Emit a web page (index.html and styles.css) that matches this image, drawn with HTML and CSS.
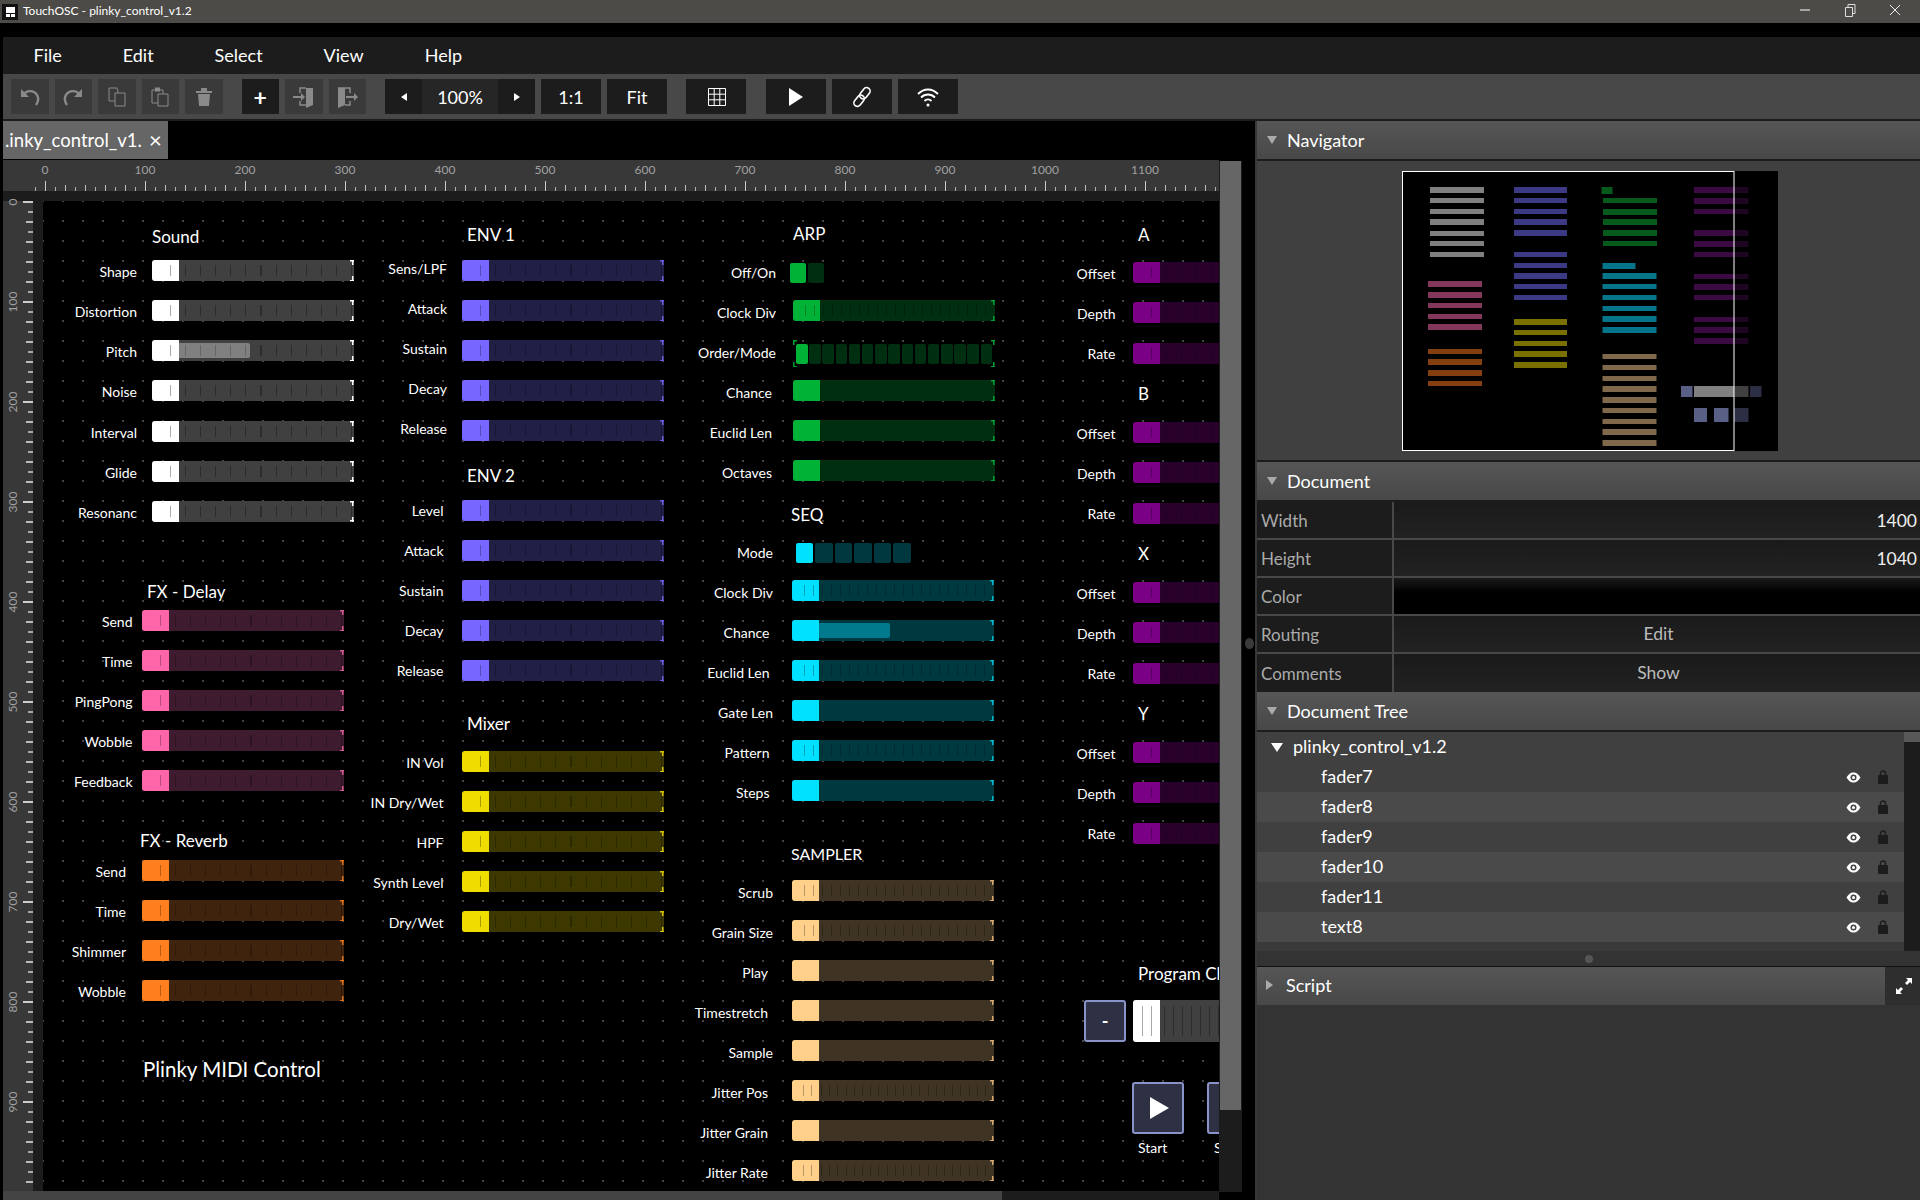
FILE: index.html
```html
<!DOCTYPE html>
<html lang="en">
<head>
<meta charset="utf-8">
<title>TouchOSC - plinky_control_v1.2</title>
<link rel="stylesheet" href="styles.css">
</head>
<body>
<svg class="sprite" width="0" height="0">
  <symbol id="eye" viewBox="0 0 15 11"><path d="M.5 5.500C3 1.500 5 .5 7.500.5s4.500 1 7 5c-2.500 4-4.500 5-7 5s-4.500-1-7-5z" fill="#fff"/><circle cx="7.500" cy="5.500" r="3" fill="#444"/><circle cx="7.500" cy="5.500" r="1.500" fill="#fff"/></symbol>
  <symbol id="lock" viewBox="0 0 10 14"><path d="M2.500 6V3.500a2.500 2.500 0 0 1 5 0V6" fill="none" stroke="#1c1c1c" stroke-width="1.500"/><rect y="5" width="10" height="9" rx="1" fill="#1c1c1c"/></symbol>
</svg>
<div class="app">
  <header class="titlebar">
    <svg class="appicon" width="16" height="16" viewBox="0 0 16 16"><rect width="16" height="16" fill="#111"/><rect x="4" y="3" width="9" height="6" fill="#fff"/><rect x="4" y="10" width="4" height="3" fill="#fff"/><rect x="9" y="10" width="4" height="3" fill="#fff"/></svg>
    <span class="wintitle">TouchOSC - plinky_control_v1.2</span>
    <div class="winbtns">
      <svg width="12" height="12" viewBox="0 0 12 12"><path d="M1 6h10" stroke="#fff" stroke-width="1"/></svg>
      <svg width="12" height="14" viewBox="0 0 12 14"><path d="M1.500 4.500h7v9h-7zM4 4.500V1.500h7v9H8.500" fill="none" stroke="#ddd"/></svg>
      <svg width="12" height="12" viewBox="0 0 12 12"><path d="M1 1l10 10M11 1L1 11" stroke="#eee" stroke-width="1"/></svg>
    </div>
  </header>
  <nav class="menubar"><span>File</span><span>Edit</span><span>Select</span><span>View</span><span>Help</span></nav>
  <div class="toolbar">
    <button class="tb off"><svg width="22" height="22" viewBox="0 0 22 22"><path d="M2 3v8h8z" fill="#8a8a8a"/><path d="M5 8c3-4 10-4 13 1 2 3 1 7-1 10" fill="none" stroke="#8a8a8a" stroke-width="2.400"/></svg></button>
    <button class="tb off"><svg width="22" height="22" viewBox="0 0 22 22"><path d="M20 3v8h-8z" fill="#8a8a8a"/><path d="M17 8c-3-4-10-4-13 1-2 3-1 7 1 10" fill="none" stroke="#8a8a8a" stroke-width="2.400"/></svg></button>
    <button class="tb off"><svg width="20" height="22" viewBox="0 0 20 22"><path d="M2 2h8l1 4v9H2z" fill="none" stroke="#8a8a8a"/><path d="M8 7h10v13H8z" fill="#3a3a3a" stroke="#8a8a8a"/></svg></button>
    <button class="tb off"><svg width="20" height="22" viewBox="0 0 20 22"><path d="M2 4h11v13H2z" fill="none" stroke="#8a8a8a"/><rect x="5" y="1.500" width="5" height="4" fill="#8a8a8a"/><path d="M8 8h10v12H8z" fill="#3a3a3a" stroke="#8a8a8a"/></svg></button>
    <button class="tb off"><svg width="18" height="22" viewBox="0 0 18 22"><path d="M1 5h16v2H1zM6 5V2h6v3M3 8h12l-1 12H4z" fill="#8a8a8a"/></svg></button>
    <button class="tb on sep plus">+</button>
    <button class="tb off"><svg width="24" height="24" viewBox="0 0 24 24"><path d="M14 3h7v17l-7 3z" fill="#8a8a8a"/><path d="M14 3H8v5M8 16v4h6" fill="none" stroke="#8a8a8a" stroke-width="1.500"/><path d="M1 11h8V8l4 4-4 4v-3H1z" fill="#8a8a8a"/></svg></button>
    <button class="tb off"><svg width="24" height="24" viewBox="0 0 24 24"><path d="M3 3h7v17l-7 3z" fill="#8a8a8a"/><path d="M3 3h12v5M15 16v4H10" fill="none" stroke="#8a8a8a" stroke-width="1.500"/><path d="M11 11h8V8l4 4-4 4v-3h-8z" fill="#8a8a8a"/></svg></button>
    <div class="zoomgroup">
      <button class="za"><span class="tri-l"></span></button>
      <span class="zv">100%</span>
      <button class="za"><span class="tri-r"></span></button>
    </div>
    <button class="tb on wide txt">1:1</button>
    <button class="tb on wide txt">Fit</button>
    <button class="tb on wide sep2"><svg width="18" height="18" viewBox="0 0 18 18"><path d="M.5.500h17v17H.500zM.5 6.200h17M.5 11.800h17M6.200.5v17M11.800.5v17" fill="none" stroke="#fff"/></svg></button>
    <button class="tb on wide sep3"><svg width="16" height="20" viewBox="0 0 16 20"><path d="M1 1l14 9-14 9z" fill="#fff"/></svg></button>
    <button class="tb on wide"><svg width="20" height="22" viewBox="0 0 20 22"><g fill="none" stroke="#fff" stroke-width="1.600" transform="rotate(-52 10 11)"><rect x="-1" y="7.500" width="12.500" height="7" rx="3.500"/><rect x="8.500" y="7.500" width="12.500" height="7" rx="3.500"/></g></svg></button>
    <button class="tb on wide"><svg width="24" height="20" viewBox="0 0 24 20"><path d="M2 7c6-6 14-6 20 0M5 10.500c4-4 10-4 14 0M8.500 14c2-2 5-2 7 0" fill="none" stroke="#fff" stroke-width="1.800"/><circle cx="12" cy="18" r="1.500" fill="#fff"/></svg></button>
  </div>

  <div class="main">
    <section class="editor">
      <div class="tabs"><div class="tab"><span class="tabname">.inky_control_v1.</span><span class="tabx">×</span></div></div>
      <div class="workspace">
        <div class="ruler-h">
          <span class="rn rn0">0</span><span class="rn rn1">100</span><span class="rn rn2">200</span><span class="rn rn3">300</span><span class="rn rn4">400</span><span class="rn rn5">500</span><span class="rn rn6">600</span><span class="rn rn7">700</span><span class="rn rn8">800</span><span class="rn rn9">900</span><span class="rn rn10">1000</span><span class="rn rn11">1100</span>
        </div>
        <div class="vscroll"><div class="vthumb"></div></div>
        <div class="ruler-v">
          <span class="rv rv0">0</span><span class="rv rv1">100</span><span class="rv rv2">200</span><span class="rv rv3">300</span><span class="rv rv4">400</span><span class="rv rv5">500</span><span class="rv rv6">600</span><span class="rv rv7">700</span><span class="rv rv8">800</span><span class="rv rv9">900</span>
        </div>
        <div class="canvas">

          <div class="group g-sound white">
            <h3 class="gt">Sound</h3>
            <div class="row"><label>Shape</label><div class="fader t"><i></i></div></div>
            <div class="row"><label>Distortion</label><div class="fader t"><i></i></div></div>
            <div class="row"><label>Pitch</label><div class="fader t"><i></i><b class="fill f72 tt"></b></div></div>
            <div class="row"><label>Noise</label><div class="fader t"><i></i></div></div>
            <div class="row"><label>Interval</label><div class="fader t"><i></i></div></div>
            <div class="row"><label>Glide</label><div class="fader t"><i></i></div></div>
            <div class="row"><label>Resonanc</label><div class="fader t"><i></i></div></div>
          </div>

          <div class="group g-delay pink">
            <h3 class="gt">FX - Delay</h3>
            <div class="row"><label>Send</label><div class="fader t"><i></i></div></div>
            <div class="row"><label>Time</label><div class="fader t"><i></i></div></div>
            <div class="row"><label>PingPong</label><div class="fader t"><i></i></div></div>
            <div class="row"><label>Wobble</label><div class="fader t"><i></i></div></div>
            <div class="row"><label>Feedback</label><div class="fader t"><i></i></div></div>
          </div>

          <div class="group g-reverb orange">
            <h3 class="gt">FX - Reverb</h3>
            <div class="row"><label>Send</label><div class="fader t"><i></i></div></div>
            <div class="row"><label>Time</label><div class="fader t"><i></i></div></div>
            <div class="row"><label>Shimmer</label><div class="fader t"><i></i></div></div>
            <div class="row"><label>Wobble</label><div class="fader t"><i></i></div></div>
          </div>

          <div class="plinky">Plinky MIDI Control</div>

          <div class="group g-env1 violet">
            <h3 class="gt">ENV 1</h3>
            <div class="row"><label>Sens/LPF</label><div class="fader t"><i></i></div></div>
            <div class="row"><label>Attack</label><div class="fader t"><i></i></div></div>
            <div class="row"><label>Sustain</label><div class="fader t"><i></i></div></div>
            <div class="row"><label>Decay</label><div class="fader t"><i></i></div></div>
            <div class="row"><label>Release</label><div class="fader t"><i></i></div></div>
          </div>

          <div class="group g-env2 violet">
            <h3 class="gt">ENV 2</h3>
            <div class="row"><label>Level</label><div class="fader t"><i></i></div></div>
            <div class="row"><label>Attack</label><div class="fader t"><i></i></div></div>
            <div class="row"><label>Sustain</label><div class="fader t"><i></i></div></div>
            <div class="row"><label>Decay</label><div class="fader t"><i></i></div></div>
            <div class="row"><label>Release</label><div class="fader t"><i></i></div></div>
          </div>

          <div class="group g-mixer yellow">
            <h3 class="gt">Mixer</h3>
            <div class="row"><label>IN Vol</label><div class="fader t"><i></i></div></div>
            <div class="row"><label>IN Dry/Wet</label><div class="fader t"><i></i></div></div>
            <div class="row"><label>HPF</label><div class="fader t"><i></i></div></div>
            <div class="row"><label>Synth Level</label><div class="fader t"><i></i></div></div>
            <div class="row"><label>Dry/Wet</label><div class="fader t"><i></i></div></div>
          </div>

          <div class="group g-arp green">
            <h3 class="gt">ARP</h3>
            <div class="row"><label>Off/On</label><div class="segs two"><u class="sel"></u><u></u></div></div>
            <div class="row"><label>Clock Div</label><div class="fader d"><i></i></div></div>
            <div class="row"><label>Order/Mode</label><div class="fader outline"><div class="segs fifteen"><u class="sel"></u><u></u><u></u><u></u><u></u><u></u><u></u><u></u><u></u><u></u><u></u><u></u><u></u><u></u><u></u></div></div></div>
            <div class="row"><label class="nudge">Chance</label><div class="fader"><i></i></div></div>
            <div class="row"><label class="nudge">Euclid Len</label><div class="fader"><i></i></div></div>
            <div class="row"><label class="nudge">Octaves</label><div class="fader"><i></i></div></div>
          </div>

          <div class="group g-seq cyan">
            <h3 class="gt">SEQ</h3>
            <div class="row"><label>Mode</label><div class="segs six"><u class="sel"></u><u></u><u></u><u></u><u></u><u></u></div></div>
            <div class="row"><label>Clock Div</label><div class="fader d"><i></i></div></div>
            <div class="row"><label class="nudge">Chance</label><div class="fader"><i></i><b class="fill f72"></b></div></div>
            <div class="row"><label class="nudge">Euclid Len</label><div class="fader d"><i></i></div></div>
            <div class="row"><label>Gate Len</label><div class="fader"><i></i></div></div>
            <div class="row"><label class="nudge">Pattern</label><div class="fader d"><i></i></div></div>
            <div class="row"><label class="nudge">Steps</label><div class="fader"><i></i></div></div>
          </div>

          <div class="group g-sampler sand">
            <h3 class="gt">SAMPLER</h3>
            <div class="row"><label>Scrub</label><div class="fader d"><i></i></div></div>
            <div class="row"><label>Grain Size</label><div class="fader d"><i></i></div></div>
            <div class="row"><label class="nudge">Play</label><div class="fader"><i></i></div></div>
            <div class="row"><label class="nudge">Timestretch</label><div class="fader"><i></i></div></div>
            <div class="row"><label>Sample</label><div class="fader"><i></i></div></div>
            <div class="row"><label class="nudge">Jitter Pos</label><div class="fader d2"><i></i></div></div>
            <div class="row"><label class="nudge">Jitter Grain</label><div class="fader"><i></i></div></div>
            <div class="row"><label class="nudge">Jitter Rate</label><div class="fader d2"><i></i></div></div>
          </div>

          <div class="group g-a magenta">
            <h3 class="gt">A</h3>
            <div class="row"><label>Offset</label><div class="fader t"><i></i></div></div>
            <div class="row"><label>Depth</label><div class="fader t"><i></i></div></div>
            <div class="row"><label>Rate</label><div class="fader t"><i></i></div></div>
          </div>
          <div class="group g-b magenta">
            <h3 class="gt">B</h3>
            <div class="row"><label>Offset</label><div class="fader t"><i></i></div></div>
            <div class="row"><label>Depth</label><div class="fader t"><i></i></div></div>
            <div class="row"><label>Rate</label><div class="fader t"><i></i></div></div>
          </div>
          <div class="group g-x magenta">
            <h3 class="gt">X</h3>
            <div class="row"><label>Offset</label><div class="fader t"><i></i></div></div>
            <div class="row"><label>Depth</label><div class="fader t"><i></i></div></div>
            <div class="row"><label>Rate</label><div class="fader t"><i></i></div></div>
          </div>
          <div class="group g-y magenta">
            <h3 class="gt">Y</h3>
            <div class="row"><label>Offset</label><div class="fader t"><i></i></div></div>
            <div class="row"><label>Depth</label><div class="fader t"><i></i></div></div>
            <div class="row"><label>Rate</label><div class="fader t"><i></i></div></div>
          </div>

          <div class="pc-title">Program Change</div>
          <div class="pc-minus">-</div>
          <div class="pc-fader"><i></i></div>
          <div class="transport tr-start"><svg width="20" height="22" viewBox="0 0 20 22"><path d="M0 0l19 11L0 22z" fill="#fff"/></svg></div>
          <div class="tr-label tl-start">Start</div>
          <div class="transport tr-stop"></div>
          <div class="tr-label tl-stop">Stop</div>
        </div>
        <div class="hscroll"><div class="hthumb"></div></div>
      </div>
    </section>

    <aside class="side">
      <div class="sash"></div>
      <div class="phead"><span class="arrow-d"></span>Navigator</div>
      <div class="navbody">
        <svg class="mini" width="376" height="280" viewBox="0 0 376 280">
          <rect width="376" height="280" fill="#000"/>
          <g fill="#808080"><rect x="28" y="16" width="54" height="6"/><rect x="28" y="27" width="54" height="5"/><rect x="28" y="38" width="54" height="5"/><rect x="28" y="48" width="54" height="6"/><rect x="28" y="60" width="54" height="5"/><rect x="28" y="70" width="54" height="5"/><rect x="28" y="81" width="54" height="5"/></g>
          <g fill="#3d3a85"><rect x="112" y="16" width="53" height="6"/><rect x="112" y="27" width="53" height="5"/><rect x="112" y="38" width="53" height="5"/><rect x="112" y="48" width="53" height="6"/><rect x="112" y="59" width="53" height="6"/><rect x="112" y="81" width="53" height="5"/><rect x="112" y="92" width="53" height="5"/><rect x="112" y="102" width="53" height="6"/><rect x="112" y="113" width="53" height="5"/><rect x="112" y="124" width="53" height="5"/></g>
          <g fill="#83375a"><rect x="26" y="110" width="54" height="6"/><rect x="26" y="121" width="54" height="6"/><rect x="26" y="132" width="54" height="5"/><rect x="26" y="143" width="54" height="5"/><rect x="26" y="153" width="54" height="6"/></g>
          <g fill="#843f10"><rect x="26" y="178" width="54" height="5"/><rect x="26" y="188" width="54" height="6"/><rect x="26" y="199" width="54" height="6"/><rect x="26" y="210" width="54" height="5"/></g>
          <g fill="#7a7000"><rect x="112" y="148" width="53" height="6"/><rect x="112" y="159" width="53" height="5"/><rect x="112" y="170" width="53" height="5"/><rect x="112" y="180" width="53" height="6"/><rect x="112" y="191" width="53" height="6"/></g>
          <g fill="#055a1c"><rect x="199.500" y="16" width="11" height="7"/><rect x="201" y="27" width="54" height="5"/><rect x="201" y="38" width="54" height="6"/><rect x="201" y="48" width="54" height="6"/><rect x="201" y="59" width="54" height="6"/><rect x="201" y="70" width="54" height="5"/></g>
          <g fill="#06758a"><rect x="200.500" y="92" width="33" height="6"/><rect x="200.500" y="102" width="54" height="6"/><rect x="200.500" y="113" width="54" height="5"/><rect x="200.500" y="124" width="54" height="5"/><rect x="200.500" y="135" width="54" height="5"/><rect x="200.500" y="145" width="54" height="6"/><rect x="200.500" y="156" width="54" height="6"/></g>
          <g fill="#80694a"><rect x="200.500" y="183" width="54" height="5"/><rect x="200.500" y="194" width="54" height="5"/><rect x="200.500" y="205" width="54" height="5"/><rect x="200.500" y="215" width="54" height="6"/><rect x="200.500" y="226" width="54" height="6"/><rect x="200.500" y="237" width="54" height="5"/><rect x="200.500" y="248" width="54" height="5"/><rect x="200.500" y="258" width="54" height="6"/><rect x="200.500" y="269" width="54" height="6"/></g>
          <g fill="#3c0a42"><rect x="292" y="16" width="54.500" height="6"/><rect x="292" y="27" width="54.500" height="6"/><rect x="292" y="38" width="54.500" height="5"/><rect x="292" y="59" width="54.500" height="6"/><rect x="292" y="70" width="54.500" height="6"/><rect x="292" y="81" width="54.500" height="5"/><rect x="292" y="103" width="54.500" height="5"/><rect x="292" y="113" width="54.500" height="6"/><rect x="292" y="124" width="54.500" height="5"/><rect x="292" y="146" width="54.500" height="5"/><rect x="292" y="156" width="54.500" height="6"/><rect x="292" y="167" width="54.500" height="6"/></g>
          <rect x="332" y="0" width="44" height="280" fill="#000" opacity=".5"/>
          <rect x="279" y="215" width="11.500" height="11" fill="#5a5f86"/><rect x="292" y="215" width="40" height="11" fill="#808080"/><rect x="332" y="215" width="14.500" height="11" fill="#404040"/><rect x="348" y="215" width="11.500" height="11" fill="#2c2f43"/>
          <rect x="292" y="237" width="13" height="14" fill="#5a5f86"/><rect x="312" y="237" width="14.500" height="14" fill="#5a5f86"/><rect x="332" y="237" width="14.500" height="14" fill="#2c2f43"/>
          <rect x=".5" y=".5" width="331.500" height="279" fill="none" stroke="#fff"/>
        </svg>
      </div>
      <div class="phead"><span class="arrow-d"></span>Document</div>
      <div class="props">
        <div class="prop"><span class="pl">Width</span><span class="pv num">1400</span></div>
        <div class="prop"><span class="pl">Height</span><span class="pv num">1040</span></div>
        <div class="prop"><span class="pl">Color</span><span class="pv color"></span></div>
        <div class="prop"><span class="pl">Routing</span><span class="pv mid">Edit</span></div>
        <div class="prop"><span class="pl">Comments</span><span class="pv mid">Show</span></div>
      </div>
      <div class="phead"><span class="arrow-d"></span>Document Tree</div>
      <div class="tree">
        <div class="tlist">
          <div class="troot"><span class="arrow-w"></span><span class="tname">plinky_control_v1.2</span></div>
          <div class="titem"><span class="tname">fader7</span><svg class="eye"><use href="#eye"/></svg><svg class="lock"><use href="#lock"/></svg></div>
          <div class="titem"><span class="tname">fader8</span><svg class="eye"><use href="#eye"/></svg><svg class="lock"><use href="#lock"/></svg></div>
          <div class="titem"><span class="tname">fader9</span><svg class="eye"><use href="#eye"/></svg><svg class="lock"><use href="#lock"/></svg></div>
          <div class="titem"><span class="tname">fader10</span><svg class="eye"><use href="#eye"/></svg><svg class="lock"><use href="#lock"/></svg></div>
          <div class="titem"><span class="tname">fader11</span><svg class="eye"><use href="#eye"/></svg><svg class="lock"><use href="#lock"/></svg></div>
          <div class="titem"><span class="tname">text8</span><svg class="eye"><use href="#eye"/></svg><svg class="lock"><use href="#lock"/></svg></div>
        </div>
        <div class="tscroll"><div class="tthumb"></div></div>
      </div>
      <div class="resize"><span class="dot"></span></div>
      <div class="scripthead">
        <div class="phead closed"><span class="arrow-r"></span>Script</div>
        <div class="expand"><svg width="18" height="18" viewBox="0 0 18 18"><path d="M11 1h6v6l-2-2-3 3-2-2 3-3zM7 17H1v-6l2 2 3-3 2 2-3 3z" fill="#fff"/></svg></div>
      </div>
      <div class="scriptbody"></div>
    </aside>
  </div>
</div>
</body>
</html>
```

FILE: styles.css
```css
* { box-sizing: border-box; }
html, body { margin: 0; padding: 0; background: #000; }
body { font-family: "Lato", "Noto Sans", sans-serif; color: #fff; }
.sprite { position: absolute; }
.app { width: 1920px; height: 1200px; overflow: hidden; display: flex; flex-direction: column; background: #000; }

.titlebar { height: 23px; background: #4c4b48; display: flex; align-items: center; padding-left: 2px; margin-bottom: 14px; flex: none; }
.appicon { flex: none; }
.wintitle { font-size: 12px; margin-left: 5px; color: #fff; padding-bottom: 2px; }
.winbtns { margin-left: auto; display: flex; align-items: center; gap: 33px; padding: 0 19px 3px 0; }

.menubar { height: 37px; margin-left: 3px; background: #1c1c1c; display: flex; align-items: center; font-size: 18px; flex: none; padding-bottom: 1px; }
.menubar span { padding: 0 30.500px; }

.toolbar { height: 47px; margin-left: 3px; background: #484848; border-bottom: 2px solid #1c1c1c; display: flex; align-items: flex-start; padding: 5px 0 0 8px; gap: 6px; flex: none; }
.tb { width: 37.500px; height: 35px; border: 0; padding: 0; display: flex; align-items: center; justify-content: center; color: #fff; font-family: inherit; }
.tb.off { background: #3a3a3a; }
.tb.on { background: #1c1c1c; }
.tb.wide { width: 60px; }
.tb.txt { font-size: 18px; }
.tb.plus { font-size: 23px; font-weight: 700; }
.sep { margin-left: 13px; }
.sep2 { margin-left: 13px; padding-left: 2px; }
.sep3 { margin-left: 14px; }
.zoomgroup { display: flex; height: 35px; width: 150px; background: #1c1c1c; margin-left: 13px; }
.za { width: 37px; border: 0; background: #1c1c1c; padding: 0; display: flex; align-items: center; justify-content: center; }
.zv { flex: 1; background: #262626; font-size: 18px; display: flex; align-items: center; justify-content: center; }
.tri-l, .tri-r { width: 0; height: 0; border-top: 4px solid transparent; border-bottom: 4px solid transparent; }
.tri-l { border-right: 6px solid #fff; }
.tri-r { border-left: 6px solid #fff; }

.main { flex: 1; display: flex; min-height: 0; }
.editor { width: 1242px; padding-left: 3px; display: flex; flex-direction: column; flex: none; }
.tabs { height: 38px; flex: none; margin-bottom: 1px; }
.tab { width: 165px; height: 38px; background: #666; display: flex; align-items: center; font-size: 18.500px; }
.tabname { white-space: nowrap; padding-left: 2px; }
.tabx { margin-left: 7px; font-size: 22px; line-height: 1; }

.workspace { position: relative; height: 1041px; background: #000; }
.ruler-h { position: absolute; left: 0; top: 0; width: 1216px; height: 41px; background-color: #1c1c1c;
  background-image: linear-gradient(#383838, #383838);
  background-size: 100% 31px; background-repeat: no-repeat; }
.ruler-h::after { content: ""; position: absolute; left: 32px; top: 21px; width: 1184px; height: 10px;
  background-image:
    linear-gradient(90deg, #ccc 1px, transparent 1px),
    linear-gradient(90deg, #c0c0c0 1px, transparent 1px),
    linear-gradient(90deg, #b0b0b0 1px, transparent 1px);
  background-size: 100px 10px, 20px 6px, 10px 4px;
  background-position: 10px bottom, 10px bottom, 0 bottom;
  background-repeat: repeat-x; }
.rn { position: absolute; top: 2px; font-size: 12px; color: #a0a0a0; width: 50px; margin-left: -25px; text-align: center; }
.rn0 { left: 42px; } .rn1 { left: 142px; } .rn2 { left: 242px; } .rn3 { left: 342px; } .rn4 { left: 442px; } .rn5 { left: 542px; } .rn6 { left: 642px; } .rn7 { left: 742px; } .rn8 { left: 842px; } .rn9 { left: 942px; } .rn10 { left: 1042px; } .rn11 { left: 1142px; }
.ruler-v { position: absolute; left: 0; top: 41px; width: 40px; height: 990px; background-color: #1c1c1c;
  background-image: linear-gradient(#383838, #383838); background-size: 30px 100%; background-repeat: no-repeat; }
.ruler-v::after { content: ""; position: absolute; left: 20px; top: 0; width: 10px; height: 990px;
  background-image:
    linear-gradient(#ccc 2px, transparent 2px),
    linear-gradient(#bbb 2px, transparent 2px),
    linear-gradient(#aaa 2px, transparent 2px);
  background-size: 10px 100px, 7px 20px, 5px 10px;
  background-position: right 0, right 0, right 0;
  background-repeat: repeat-y; }
.rv { position: absolute; left: 10px; font-size: 12px; color: #a0a0a0; width: 50px; height: 14px; line-height: 14px; margin: -7px 0 0 -25px; text-align: center; transform: rotate(-90deg); }
.rv0 { top: 1px; } .rv1 { top: 101px; } .rv2 { top: 201px; } .rv3 { top: 301px; } .rv4 { top: 401px; } .rv5 { top: 501px; } .rv6 { top: 601px; } .rv7 { top: 701px; } .rv8 { top: 801px; } .rv9 { top: 901px; }

.canvas { position: absolute; left: 40px; top: 41px; width: 1176px; height: 990px; overflow: hidden; background-color: #000;
  background-image: radial-gradient(circle at 1px 1px, #444 1px, transparent 1.300px);
  background-size: 20px 20px; background-position: -1px -1px; }
.vscroll { position: absolute; left: 1216px; top: 1px; width: 23px; height: 1031px; background: #1c1c1c; }
.vthumb { width: 21px; height: 949px; margin-left: 1px; background: #666; }
.hscroll { position: absolute; left: 0; top: 1031px; width: 1216px; height: 10px; background: #1c1c1c; }
.hthumb { width: 999px; height: 9px; background: #444; }

.group { position: absolute; --row: 40px; --lbl: 15px; --nudge: 4px; }
.gt { margin: 0; font-weight: 400; font-size: 17px; line-height: 20px; position: absolute; white-space: nowrap; }
.row { height: var(--row); display: flex; align-items: flex-start; position: relative; }
.row label { position: absolute; right: 100%; top: var(--lt, 3px); margin-right: var(--lbl); font-size: 14px; line-height: 20px; white-space: nowrap; }
.row label.nudge { margin-right: calc(var(--lbl) + var(--nudge)); }

.fader { position: relative; width: 201.500px; height: 21px; background-color: var(--bg); border-radius: 3px 0 0 3px; flex: none; }
.fader i { position: absolute; left: 0; top: 0; bottom: 0; width: 26.500px; background: var(--h); border-radius: 3px 0 0 3px; z-index: 2; }
.fader::after { content: ""; position: absolute; right: 0; top: 0; bottom: 0; width: 4px; z-index: 3;
  background-image: linear-gradient(var(--c), var(--c)), linear-gradient(var(--c), var(--c)), linear-gradient(var(--c), var(--c)), linear-gradient(var(--c), var(--c));
  background-size: 4px 1.500px, 1.500px 5px, 4px 1.500px, 1.500px 5px;
  background-position: right top, right top, right bottom, right bottom;
  background-repeat: no-repeat; }
.fader.t, .fader.d, .fader.d2 { background-repeat: no-repeat; }
.fader.t { background-image: repeating-linear-gradient(90deg, var(--tk) 0 1px, transparent 1px 15.100px); background-size: calc(100% - 33px) 11px; background-position: 33px 5px; }
.fader.d { background-image: repeating-linear-gradient(90deg, var(--tk) 0 1px, transparent 1px 9px); background-size: calc(100% - 34px) 11px; background-position: 30px 5px; }
.fader.d2 { background-image: repeating-linear-gradient(90deg, var(--tk) 0 1px, transparent 1px 8.200px); background-size: calc(100% - 34px) 11px; background-position: 29px 5px; }
.fader.t i::after, .fader.d i::after, .fader.d2 i::after { content: ""; position: absolute; top: 5px; height: 11px; }
.fader.t i::after { left: 18px; width: 1px; background: var(--htk); }
.fader.d i::after { left: 12px; width: 10px; background: repeating-linear-gradient(90deg, var(--htk) 0 1px, transparent 1px 9px); }
.fader.d2 i::after { left: 11px; width: 9px; background: repeating-linear-gradient(90deg, var(--htk) 0 1px, transparent 1px 8px); }
.fill { position: absolute; left: 26px; top: 3px; bottom: 3px; background-color: var(--v); border-radius: 0 2px 2px 0; z-index: 1; }
.fill.tt { background-image: repeating-linear-gradient(90deg, #666 0 1px, transparent 1px 15.100px); background-size: 100% 11px; background-position: 7px 2px; background-repeat: no-repeat; }
.f72 { width: 72px; }
.fader.outline { background: none; height: 27px; }
.fader.outline::before { content: ""; position: absolute; left: 0; top: 0; bottom: 0; width: 4px;
  background-image: linear-gradient(var(--c), var(--c)), linear-gradient(var(--c), var(--c)), linear-gradient(var(--c), var(--c)), linear-gradient(var(--c), var(--c));
  background-size: 4px 1.500px, 1.500px 5px, 4px 1.500px, 1.500px 5px;
  background-position: left top, left top, left bottom, left bottom;
  background-repeat: no-repeat; }
.fader.outline .segs { position: absolute; left: 3px; top: 3.500px; }
.segs { display: flex; flex: none; }
.segs u { display: block; background: var(--bg); border-radius: 2px; height: 20px; }
.segs u.sel { background: var(--h); }
.segs.two { gap: 2px; margin: 3px 0 0 -3px; }
.segs.two u { width: 16px; }
.segs.six { gap: 2px; margin: 3px 0 0 3.500px; }
.segs.six u { width: 17.600px; }
.segs.fifteen { gap: 1.700px; }
.segs.fifteen u { width: 11.500px; }

.white { --h: #fff; --bg: #404040; --tk: #2c2c2c; --htk: #aaa; --c: #fff; --v: #808080; }
.pink { --h: #ff66aa; --bg: #3e1b2e; --tk: #2d1421; --htk: #b84c7c; --c: #d85a92; --v: #a04570; }
.orange { --h: #ff7f1f; --bg: #3f230d; --tk: #2e190a; --htk: #b85c14; --c: #e07018; --v: #a05010; }
.violet { --h: #7766ff; --bg: #211f45; --tk: #181733; --htk: #5a4cb8; --c: #6a5de0; --v: #4a44a0; }
.yellow { --h: #f0dd00; --bg: #3d3800; --tk: #2c2900; --htk: #a69c00; --c: #d4c400; --v: #908800; }
.green { --h: #00b336; --bg: #002e10; --tk: #00220c; --htk: #008228; --c: #00a030; --v: #006a20; }
.cyan { --h: #00e1ff; --bg: #00383f; --tk: #002a30; --htk: #00a2b8; --c: #00b8d0; --v: #007a8c; }
.sand { --h: #ffd08a; --bg: #3f3324; --tk: #2e2519; --htk: #b89568; --c: #d4aa70; --v: #a08860; }
.magenta { --h: #7a0085; --bg: #280029; --tk: #1e001f; --htk: #580060; --c: #7a0085; --v: #500058; }

.g-sound { left: 109px; top: 59px; --lt: 2px; --row: 40.170px; } .g-sound .gt { left: 0; top: -33px; }
.g-delay { left: 99px; top: 409px; --lt: 2px; --lbl: 9.500px; } .g-delay .gt { left: 5px; top: -28px; }
.g-reverb { left: 99px; top: 659px; --lt: 2px; --lbl: 16px; } .g-reverb .gt { left: -2px; top: -29px; }
.plinky { position: absolute; left: 100px; top: 855px; font-size: 20.500px; line-height: 26px; white-space: nowrap; }
.g-env1 { left: 419px; top: 59px; --lt: -1px; } .g-env1 .gt { left: 5px; top: -35px; }
.g-env2 { left: 419px; top: 299px; --lt: 1px; --lbl: 18.500px; } .g-env2 .gt { left: 5px; top: -34px; }
.g-mixer { left: 419px; top: 550px; --lt: 2px; --lbl: 18.500px; } .g-mixer .gt { left: 5px; top: -37px; }
.g-arp { left: 750px; top: 59px; --lt: 3px; --lbl: 17px; } .g-arp .gt { left: 0; top: -36px; }
.g-seq { left: 749px; top: 339px; --lt: 3px; --lbl: 19px; --nudge: 3.500px; } .g-seq .gt { left: -1px; top: -35px; }
.g-sampler { left: 749px; top: 679px; --lt: 3px; --lbl: 19px; --nudge: 5px; } .g-sampler .gt { left: -1px; top: -36px; font-size: 16px; }
.magenta { --row: 40.330px; --lt: 1.500px; --lbl: 17.500px; }
.g-a { left: 1090px; top: 61px; } .g-a .gt { left: 5px; top: -37px; }
.g-b { left: 1090px; top: 221px; } .g-b .gt { left: 5px; top: -38px; }
.g-x { left: 1090px; top: 381px; } .g-x .gt { left: 5px; top: -38px; }
.g-y { left: 1090px; top: 541px; } .g-y .gt { left: 5px; top: -38px; }

.pc-title { position: absolute; left: 1095px; top: 763px; font-size: 17px; line-height: 20px; white-space: nowrap; }
.pc-minus { position: absolute; left: 1041px; top: 799px; width: 42px; height: 42px; background: #2e3144; border: 2px solid #8a93c8; border-radius: 3px; display: flex; align-items: center; justify-content: center; font-size: 18px; font-weight: 700; }
.pc-fader { position: absolute; left: 1090px; top: 799px; width: 201px; height: 42px; background-color: #404040; --tk: #2c2c2c; border-radius: 3px 0 0 3px;
  background-image: repeating-linear-gradient(90deg, var(--tk) 0 1px, transparent 1px 9px); background-size: 100% 30px; background-position: 31px 6px; background-repeat: no-repeat; }
.pc-fader i { position: absolute; left: 0; top: 0; bottom: 0; width: 27px; background-color: #fff; border-radius: 3px 0 0 3px;
  background-image: repeating-linear-gradient(90deg, #aaa 0 1px, transparent 1px 9px); background-size: 19px 30px; background-position: 9px 6px; background-repeat: no-repeat; }
.transport { position: absolute; width: 52px; height: 52px; background: #2e3144; border: 2px solid #8a93c8; border-radius: 3px; display: flex; align-items: center; justify-content: center; padding-left: 3px; }
.tr-start { left: 1089px; top: 881px; }
.tr-stop { left: 1164px; top: 881px; }
.tr-label { position: absolute; font-size: 14px; line-height: 18px; top: 938px; }
.tl-start { left: 1095px; }
.tl-stop { left: 1171px; }

.side { position: relative; flex: 1; padding-left: 15px; background: #000; display: flex; flex-direction: column; min-width: 0; }
.side::before { content: ""; position: absolute; left: 13px; top: 0; bottom: 0; width: 2px; background: #383838; }
.sash { position: absolute; left: 3px; top: 517px; width: 9px; height: 11px; background: #3a3a3a; border-radius: 50%; }
.phead { height: 40px; flex: none; background: linear-gradient(#565656, #484848); border-bottom: 2px solid #1c1c1c; display: flex; align-items: center; padding-left: 10px; font-size: 18px; color: #fff; }
.arrow-d { width: 0; height: 0; border-left: 5px solid transparent; border-right: 5px solid transparent; border-top: 8px solid #aaa; margin-right: 10px; }
.arrow-r { width: 0; height: 0; border-top: 5px solid transparent; border-bottom: 5px solid transparent; border-left: 7px solid #aaa; margin-right: 13px; }
.arrow-w { width: 0; height: 0; border-left: 6px solid transparent; border-right: 6px solid transparent; border-top: 9px solid #fff; margin: 0 10px 0 14px; }
.navbody { height: 301px; flex: none; background: #404040; border-bottom: 2px solid #1c1c1c; padding: 10px 0 0 145px; }
.mini { display: block; }
.props { flex: none; background: #1c1c1c; }
.prop { height: 38px; display: flex; border-bottom: 2px solid #484848; font-size: 17.500px; }
.prop:last-child { border-bottom: 0; }
.pl { width: 137px; flex: none; padding-left: 4px; color: #aaa; display: flex; align-items: center; border-right: 2px solid #484848; background: #1c1c1c; font-size: 17px; }
.pv { flex: 1; display: flex; align-items: center; color: #ccc; background: linear-gradient(#1a1a1a, #222); padding-right: 3px; }
.pv.num { justify-content: flex-end; color: #eee; }
.pv.mid { justify-content: center; color: #bbb; padding: 0 0 2px 3px; }
.pv.color { background: linear-gradient(#1a1a1a, #000 40%); }
.tree { height: 219px; flex: none; display: flex; background: #3a3a3a; }
.tlist { flex: 1; }
.troot { height: 30px; background: #404040; display: flex; align-items: center; font-size: 18px; }
.titem { height: 30px; display: flex; align-items: center; font-size: 18px; padding: 0 16px 0 64px; background: #404040; }
.titem:nth-child(odd) { background: #4a4a4a; }
.tname { flex: 1; padding-bottom: 2px; }
.eye { width: 15px; height: 11px; margin-right: 17px; flex: none; }
.lock { width: 10px; height: 14px; flex: none; }
.tscroll { width: 16px; background: #1c1c1c; flex: none; }
.tthumb { height: 10px; background: #585858; }
.resize { height: 16px; flex: none; background: #333; border-bottom: 1px solid #111; display: flex; align-items: center; justify-content: center; padding-left: 1px; }
.dot { width: 8px; height: 8px; border-radius: 50%; background: #555; }
.scripthead { display: flex; height: 38px; flex: none; background: #333; }
.phead.closed { flex: 1; height: 38px; border-bottom: 0; padding: 0 0 2px 9px; }
.expand { width: 35px; display: flex; align-items: center; justify-content: center; background: #2e2e2e; padding-left: 3px; }
.scriptbody { flex: 1; background: #333; }
```
